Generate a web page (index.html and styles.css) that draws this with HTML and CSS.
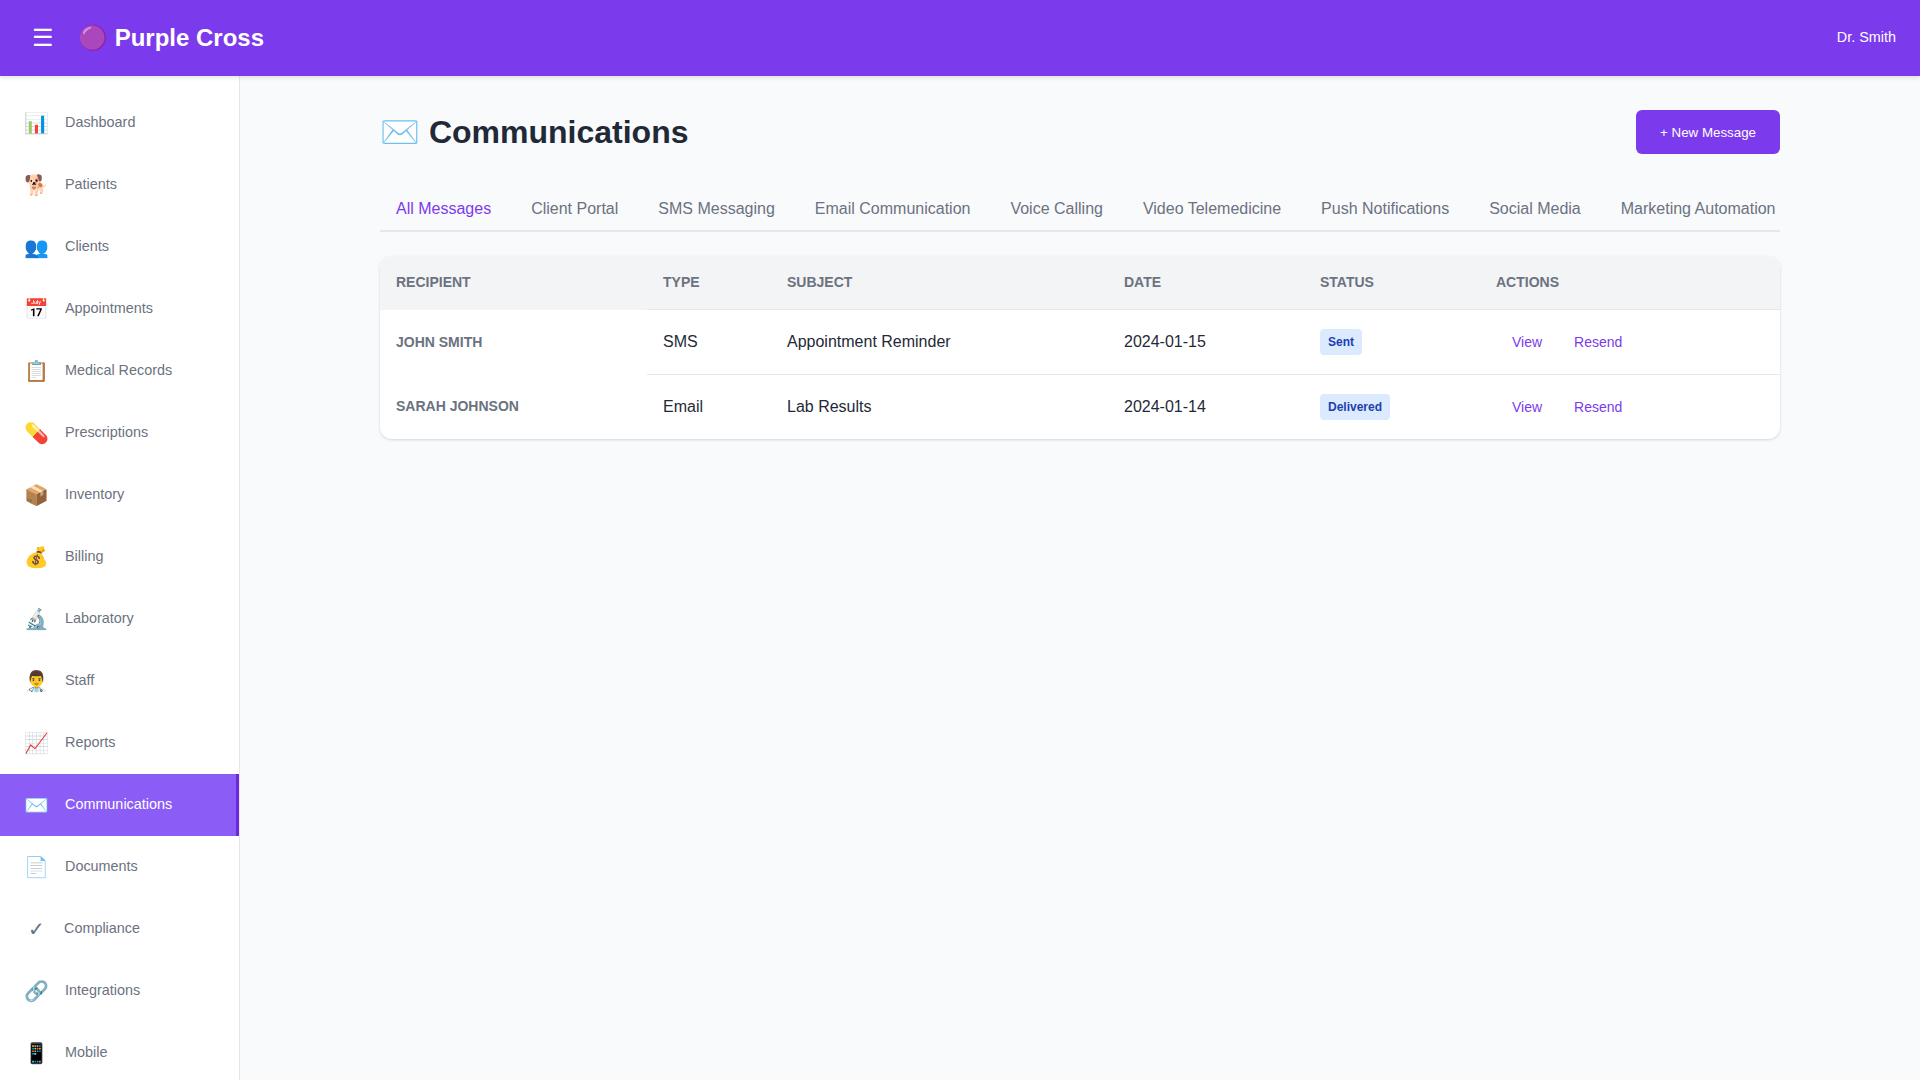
FILE: index.html
```html
<!DOCTYPE html>
<html lang="en">
<head>
  <meta charset="UTF-8">
  <meta name="viewport" content="width=device-width, initial-scale=1.0">
  <title>Purple Cross - Communications</title>
  <link rel="stylesheet" href="styles.css">
</head>
<body>
  <header class="topbar">
    <div class="topbar-left">
      <button class="menu-btn">☰</button>
      <div class="logo">🟣 Purple Cross</div>
    </div>
    <div class="user">Dr. Smith</div>
  </header>
  <div class="layout">
    <nav class="sidebar">
      <a class="nav-item"><span class="nav-icon">📊</span><span>Dashboard</span></a>
      <a class="nav-item"><span class="nav-icon">🐕</span><span>Patients</span></a>
      <a class="nav-item"><span class="nav-icon">👥</span><span>Clients</span></a>
      <a class="nav-item"><span class="nav-icon">📅</span><span>Appointments</span></a>
      <a class="nav-item"><span class="nav-icon">📋</span><span>Medical Records</span></a>
      <a class="nav-item"><span class="nav-icon">💊</span><span>Prescriptions</span></a>
      <a class="nav-item"><span class="nav-icon">📦</span><span>Inventory</span></a>
      <a class="nav-item"><span class="nav-icon">💰</span><span>Billing</span></a>
      <a class="nav-item"><span class="nav-icon">🔬</span><span>Laboratory</span></a>
      <a class="nav-item"><span class="nav-icon">👨‍⚕️</span><span>Staff</span></a>
      <a class="nav-item"><span class="nav-icon">📈</span><span>Reports</span></a>
      <a class="nav-item active"><span class="nav-icon">✉️</span><span>Communications</span></a>
      <a class="nav-item"><span class="nav-icon">📄</span><span>Documents</span></a>
      <a class="nav-item"><span class="nav-icon">✓</span><span>Compliance</span></a>
      <a class="nav-item"><span class="nav-icon">🔗</span><span>Integrations</span></a>
      <a class="nav-item"><span class="nav-icon">📱</span><span>Mobile</span></a>
    </nav>
    <main class="content">
      <div class="page">
        <div class="page-head">
          <h1>✉️ Communications</h1>
          <button class="primary-btn">+ New Message</button>
        </div>
        <div class="tabs">
          <button class="tab active">All Messages</button>
          <button class="tab">Client Portal</button>
          <button class="tab">SMS Messaging</button>
          <button class="tab">Email Communication</button>
          <button class="tab">Voice Calling</button>
          <button class="tab">Video Telemedicine</button>
          <button class="tab">Push Notifications</button>
          <button class="tab">Social Media</button>
          <button class="tab">Marketing Automation</button>
        </div>
        <div class="table-card">
          <table>
            <colgroup>
              <col class="col-recipient">
              <col class="col-type">
              <col class="col-subject">
              <col class="col-date">
              <col class="col-status">
              <col>
            </colgroup>
            <thead>
              <tr>
                <th>Recipient</th>
                <th>Type</th>
                <th>Subject</th>
                <th>Date</th>
                <th>Status</th>
                <th>Actions</th>
              </tr>
            </thead>
            <tbody>
              <tr>
                <th>John Smith</th>
                <td>SMS</td>
                <td>Appointment Reminder</td>
                <td>2024-01-15</td>
                <td><span class="badge">Sent</span></td>
                <td class="actions"><button>View</button><button>Resend</button></td>
              </tr>
              <tr>
                <th>Sarah Johnson</th>
                <td>Email</td>
                <td>Lab Results</td>
                <td>2024-01-14</td>
                <td><span class="badge">Delivered</span></td>
                <td class="actions"><button>View</button><button>Resend</button></td>
              </tr>
            </tbody>
          </table>
        </div>
      </div>
    </main>
  </div>
</body>
</html>
```

FILE: styles.css
```css
* {
  margin: 0;
  padding: 0;
  box-sizing: border-box;
}
body {
  height: 100vh;
  overflow: hidden;
  display: flex;
  flex-direction: column;
  font-family: "Liberation Sans", Arial, sans-serif;
  font-size: 16px;
  line-height: 1.5;
  color: #1f2937;
  background: #f9fafb;
}
button {
  font-family: inherit;
  border: none;
  background: none;
}

.topbar {
  position: relative;
  z-index: 2;
  flex: none;
  height: 76px;
  padding: 0 24px;
  display: flex;
  align-items: center;
  justify-content: space-between;
  background: #7c3aed;
  color: #fff;
  box-shadow: 0 2px 4px rgba(0,0,0,.1);
}
.topbar-left {
  display: flex;
  align-items: center;
  gap: 16px;
}
.menu-btn {
  padding: 8px;
  font-size: 24px;
  line-height: 1.5;
  color: #fff;
}
.logo {
  font-size: 24px;
  font-weight: 700;
}
.user {
  font-size: 14.4px;
}

.layout {
  flex: 1;
  min-height: 0;
  display: flex;
}
.sidebar {
  flex: none;
  width: 240px;
  padding: 16px 0;
  overflow: hidden;
  background: #fff;
  border-right: 1px solid #e5e7eb;
}
.nav-item {
  display: flex;
  align-items: center;
  gap: 16px;
  padding: 16px 24px;
  font-size: 14.4px;
  color: #6b7280;
}
.nav-item.active {
  background: #8b5cf6;
  color: #fff;
  border-right: 3px solid #6d28d9;
}
.nav-icon {
  min-width: 24px;
  font-size: 20px;
  text-align: center;
}

.content {
  flex: 1;
  min-width: 0;
  padding: 32px;
}
.page {
  max-width: 1400px;
  margin: 0 auto;
}
.page-head {
  display: flex;
  align-items: center;
  justify-content: space-between;
  margin-bottom: 32px;
}
h1 {
  font-size: 32px;
  font-weight: 700;
  color: #1f2937;
}
.primary-btn {
  padding: 14.4px 24px;
  font-size: 13.333px;
  line-height: normal;
  color: #fff;
  background: #7c3aed;
  border-radius: 6px;
}

.tabs {
  display: flex;
  gap: 8px;
  overflow: hidden;
  margin-bottom: 24px;
  border-bottom: 2px solid #e5e7eb;
}
.tab {
  flex: none;
  padding: 12px 16px;
  font-size: 16px;
  color: #6b7280;
}
.tab.active {
  color: #7c3aed;
}

.table-card {
  overflow: hidden;
  background: #fff;
  border-radius: 12px;
  box-shadow: 0 1px 3px rgba(0,0,0,.15);
}
table {
  width: 100%;
  table-layout: fixed;
  border-collapse: collapse;
}
.col-recipient { width: 267px; }
.col-type { width: 124px; }
.col-subject { width: 337px; }
.col-date { width: 196px; }
.col-status { width: 176px; }
th {
  padding: 16px;
  text-align: left;
  font-size: 14px;
  font-weight: 700;
  text-transform: uppercase;
  color: #6b7280;
}
thead tr {
  background: #f3f4f6;
}
td {
  padding: 16px;
  font-size: 16px;
  color: #1f2937;
  border-top: 1px solid #e5e7eb;
}
.badge {
  display: inline-block;
  padding: 4px 8px;
  font-size: 12px;
  font-weight: 700;
  color: #1e40af;
  background: #dbeafe;
  border-radius: 4px;
}
.actions button {
  padding: 8px 16px;
  font-size: 14px;
  color: #7c3aed;
}
```
